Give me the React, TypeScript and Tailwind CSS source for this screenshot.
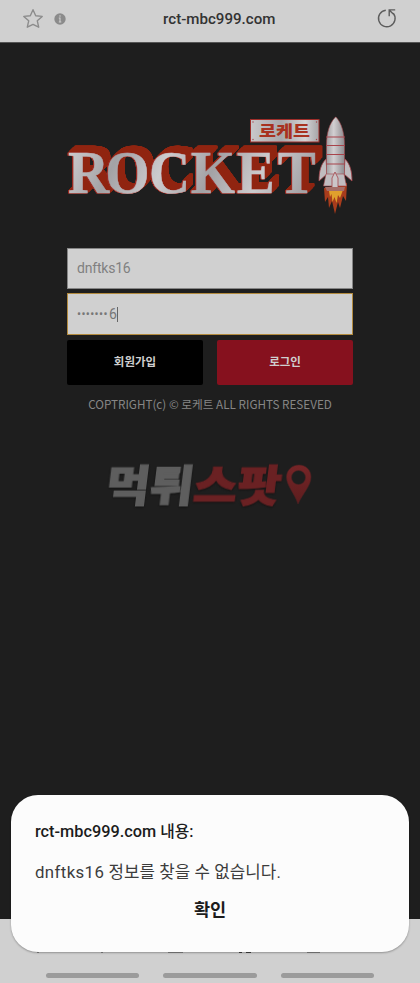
import React from "react";

function Rocket() {
  return (
    <g strokeLinejoin="round">
      <path d="M324 188l1 14 3-5 1 11 3-7 3 13 3-12 2 6 3-12 3 5 1-18z" fill="#a83c1c" />
      <path d="M329 191l1 6 1.500-3 1 8 2-5 2 6 1.500-8 2 3 3-8z" fill="#e0a02c" />
      <path d="M326 159c-5 5-7 12-7 22l8-7zM345 159c5 5 7 12 7 22l-8-7z" fill="#c0bcbf" stroke="#a3444a" strokeWidth=".8" />
      <path d="M335.500 117c-6 6-9 16-9 28v33h18v-33c0-12-3-22-8.500-28z" fill="url(#steel)" stroke="#a3444a" strokeWidth=".6" />
      <path d="M326 174l-2.500 12h23l-2.500-12z" fill="#c0bcbf" stroke="#a3444a" strokeWidth=".6" />
      <path d="M326 137h19M326 145.500h19M326 154.500h19M326 164h19" stroke="#a8434a" strokeWidth="1" />
      <path d="M332 188v-10l3-6 3 6v10z" fill="#cbc6c8" stroke="#a3444a" strokeWidth=".8" />
      <path d="M325 187h20l-1 4h-17z" fill="#a56f69" />
    </g>
  );
}

function Logo() {
  return (
    <svg className="block h-[110px] w-[300px] overflow-visible" viewBox="60 110 300 110" role="img" aria-label="ROCKET">
      <defs>
        <linearGradient id="steel" x1="0" x2="1">
          <stop offset="0" stopColor="#a09da0" />
          <stop offset=".4" stopColor="#d2cfd1" />
          <stop offset="1" stopColor="#8e8b8f" />
        </linearGradient>
        <linearGradient id="plate" x1="0" x2="1">
          <stop offset="0" stopColor="#c9c8ca" />
          <stop offset=".45" stopColor="#a9a8ab" />
          <stop offset=".8" stopColor="#d3d2d4" />
          <stop offset="1" stopColor="#a5a4a6" />
        </linearGradient>
        <linearGradient id="face" gradientUnits="userSpaceOnUse" x1="0" y1="-40" x2="44" y2="-18" spreadMethod="reflect">
          <stop offset="0" stopColor="#cccbcd" />
          <stop offset=".5" stopColor="#b9b7ba" />
          <stop offset="1" stopColor="#a3a2a5" />
        </linearGradient>
      </defs>
      <g className="[filter:drop-shadow(1px_-0.8px_0_#902410)_drop-shadow(2px_-1.6px_0_#902410)_drop-shadow(2.5px_-2px_0_#902410)_drop-shadow(2.5px_-2px_0_#902410)]">
        <g className="[filter:drop-shadow(0.6px_0_0_#9b2a22)_drop-shadow(-0.6px_0_0_#9b2a22)_drop-shadow(0_0.6px_0_#9b2a22)]">
          <text
            transform="translate(68 193) scale(.92 1)"
            x="0 40.500 88 133.500 183.500 228"
            className="font-['Liberation_Serif',serif] text-[62px] font-bold"
            fill="url(#face)"
            stroke="url(#face)"
            strokeWidth=".5"
          >
            ROCKET
          </text>
        </g>
      </g>
      <rect x="250.500" y="119.500" width="68.500" height="22.500" fill="url(#plate)" stroke="#9e2e2a" />
      <g fill="#a3444a">
        <circle cx="253" cy="122" r=".7" />
        <circle cx="316.500" cy="122" r=".7" />
        <circle cx="253" cy="139.500" r=".7" />
        <circle cx="316.500" cy="139.500" r=".7" />
      </g>
      <text x="259" y="137" textLength="51" lengthAdjust="spacingAndGlyphs" className="font-['Noto_Sans_CJK_KR',sans-serif] text-[16px] font-black" fill="#a83220">
        로케트
      </text>
      <Rocket />
    </svg>
  );
}

function Watermark() {
  return (
    <svg className="block h-[60px] w-[220px] overflow-visible" viewBox="100 455 220 60" role="img" aria-label="먹튀스팟">
      <defs>
        <linearGradient id="red" x1="0" y1="0" x2="0" y2="1">
          <stop offset="0" stopColor="#762527" />
          <stop offset="1" stopColor="#5c1d1e" />
        </linearGradient>
      </defs>
      <text
        transform="translate(104.500 501.500) skewX(-7)"
        textLength="175"
        lengthAdjust="spacingAndGlyphs"
        className="font-['Noto_Sans_CJK_KR',sans-serif] text-[43px] font-black [filter:drop-shadow(0_1px_1px_#111)]"
        strokeWidth="1.200"
      >
        <tspan fill="#5e5e5e" stroke="#5e5e5e">먹튀</tspan>
        <tspan fill="#6a2123" stroke="#6a2123">스팟</tspan>
      </text>
      <path fillRule="evenodd" d="M299 465c-7 0-12.500 5-12.500 12 0 9 8 16 11.500 27 5-11 13-18 13-27 0-7-5-12-12-12zm-.5 5.500a7 7 0 110 14 7 7 0 010-14z" fill="url(#red)" stroke="#4d2021" strokeWidth=".6" />
    </svg>
  );
}

function AddressBar() {
  return (
    <header className="flex h-[43px] shrink-0 items-center border-b border-[#555] bg-[#d0d0d0] px-[22px] pb-[5px]">
      <svg className="h-[22px] w-[22px]" viewBox="0 0 22 22" fill="none" stroke="#8c8c8c" strokeWidth="1.400" strokeLinejoin="round">
        <path d="M11 1.700l2.700 6 6.500.7-4.900 4.400 1.400 6.400L11 16.400l-5.700 2.800 1.400-6.400-4.900-4.400 6.500-.7z" />
      </svg>
      <svg className="ml-[9.5px] h-3 w-3" viewBox="0 0 12 12">
        <circle cx="6" cy="6" r="5.700" fill="#8b8b8b" />
        <path d="M6 2.300v1.400M4.800 5H6v4M4.800 9h2.500" stroke="#d0d0d0" strokeWidth="1.100" fill="none" />
      </svg>
      <div className="flex-1 pr-[3px] text-center text-[15.1px] font-medium leading-5 text-[#333]">
        rct-mbc999.com
      </div>
      <svg className="h-[22px] w-[22px]" viewBox="0 0 22 22" fill="none" stroke="#5c5c5c" strokeWidth="1.400">
        <path d="M9.800 2.200A8.300 8.300 0 1017.300 5.300M13.200 8.200V1.900h6M13.400 2.200l3.900 3.900" />
      </svg>
    </header>
  );
}

function Alert() {
  return (
    <div className="absolute left-[11px] top-[795px] flex h-[157px] w-[398px] flex-col rounded-[27px] bg-[#fcfcfc] px-[24px] pt-[25px] text-[#1c1c1c] shadow-[0_1px_2px_rgba(0,0,0,0.3)]">
      <h1 className="whitespace-nowrap text-[16.3px] font-medium leading-6">
        rct-mbc999.com <span className="text-[15.8px]">내용:</span>
      </h1>
      <p className="mt-[16px] whitespace-nowrap text-[16.8px] leading-6 text-[#3c3c3c]">
        <span className="tracking-[0.4px]">dnftks16</span> <span className="tracking-[0.08px]">정보를 찾을 수 없습니다.</span>
      </p>
      <button className="mt-[14px] self-center text-[17.5px] font-bold leading-6">확인</button>
    </div>
  );
}

export default function App() {
  return (
    <div className="relative flex h-[983px] w-[420px] flex-col overflow-hidden bg-[#1e1e1e] font-[Roboto,'Noto_Sans_CJK_KR',sans-serif]">
      <AddressBar />
      <main className="flex flex-1 flex-col items-center pt-[67px]">
        <Logo />
        <form className="mt-[28px] w-[286px]">
          <div className="flex h-[41px] items-center border border-[#858585] bg-[#d0d0d0] pl-[9px] text-[14px] tracking-[-0.2px] text-[#808080]">
            dnftks16
          </div>
          <div className="mt-[4px] flex h-[42px] items-center border border-[#b28a3e] bg-[#d0d0d0] pl-[9px] text-[14px] text-[#777]">
            <span className="w-[32px] text-[12px] tracking-[0.35px]">•••••••</span>
            <span>6</span>
            <span className="h-[15px] w-px bg-[#666]" />
          </div>
          <div className="mt-[5px] flex gap-[14px] text-[11.5px] font-bold text-[#cfcfcf]">
            <button type="button" className="h-[45px] w-[136px] rounded-[2px] bg-black">회원가입</button>
            <button type="button" className="h-[45px] w-[136px] rounded-[2px] bg-[#86111e]">로그인</button>
          </div>
        </form>
        <p className="mt-[10px] whitespace-nowrap font-['Noto_Sans_CJK_KR',sans-serif] text-[11.7px] leading-[18px] text-[#868686]">
          COPTRIGHT(c) © 로케트 ALL RIGHTS RESEVED
        </p>
        <div className="mt-[42px]">
          <Watermark />
        </div>
      </main>
      <footer className="flex h-[64px] shrink-0 flex-col bg-[#d0d0d0]">
        <svg className="mt-[32px] h-[3px] w-[420px]" viewBox="0 951 420 3" fill="#444">
          <path d="M37 951h2v1.500h-2zM101 951h2v1.500h-2zM168 951h15v1.500h-15zM239 951h3v2h-3zM246 951h5v2h-5zM307 951h13v1.500h-13z" />
        </svg>
        <div className="mt-[19px] flex justify-center gap-[24px]">
          <span className="h-[5px] w-[93.500px] rounded-full bg-[#9b9b9b]" />
          <span className="h-[5px] w-[93.500px] rounded-full bg-[#9b9b9b]" />
          <span className="h-[5px] w-[93.500px] rounded-full bg-[#9b9b9b]" />
        </div>
      </footer>
      <Alert />
    </div>
  );
}
